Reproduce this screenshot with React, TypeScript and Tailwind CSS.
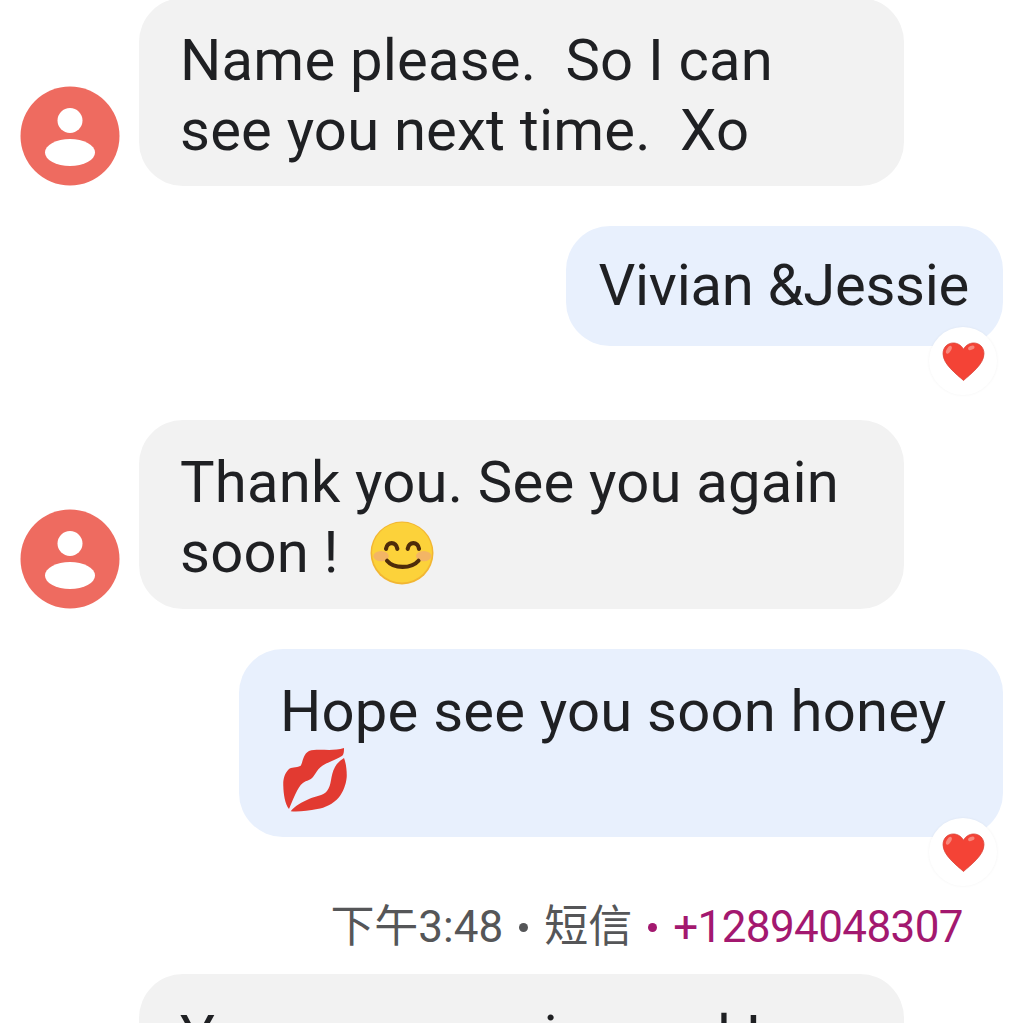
const font = "[font-family:Roboto,'Noto_Sans_CJK_SC',sans-serif]";

function Avatar() {
  return (
    <svg viewBox="0 0 100 100" className="w-[100px] h-[100px] shrink-0">
      <circle cx="50" cy="50" r="49.5" fill="#ee6b60" />
      <circle cx="50" cy="34.5" r="12.5" fill="#fff" />
      <ellipse cx="50" cy="66.5" rx="25" ry="13.5" fill="#fff" />
    </svg>
  );
}

function Heart() {
  return (
    <div className="absolute right-[6px] bottom-[-49px] w-[68px] h-[68px] rounded-full bg-white shadow-[0_0_3px_rgba(0,0,0,0.05)] flex items-center justify-center">
      <svg viewBox="0 0 44 40" className="w-[43px] h-[39px]">
        <path d="M22 39.500 C15 33 1 23 1 12 C1 5 6 1 11.500 1 C16 1 20 3.500 22 7.500 C24 3.500 28 1 32.500 1 C38 1 43 5 43 12 C43 23 29 33 22 39.500Z" fill="#f44336" stroke="#d9443a" strokeWidth="0.8" />
        <ellipse cx="7" cy="8" rx="2.200" ry="4.500" transform="rotate(30 7 8)" fill="#f7877c" />
        <ellipse cx="30" cy="6" rx="3.500" ry="2" transform="rotate(-25 30 6)" fill="#f7877c" />
      </svg>
    </div>
  );
}

function Smile() {
  return (
    <svg viewBox="0 0 62 62" className="ml-[2px] w-[64px] h-[64px] inline-block align-[-13px]">
      <circle cx="31" cy="31" r="30.500" fill="#f2b632" />
      <circle cx="31" cy="30.500" r="29" fill="#fcd23a" />
      <ellipse cx="10.700" cy="34" rx="7.500" ry="5" fill="#f3b565" />
      <ellipse cx="52" cy="34" rx="7.500" ry="5" fill="#f3b565" />
      <path d="M15.500 27 C16.500 19.500 25.500 19.500 26.500 27" fill="none" stroke="#4e2c0a" strokeWidth="4" strokeLinecap="round" />
      <path d="M36.500 27 C37.500 19.500 46.500 19.500 47.500 27" fill="none" stroke="#4e2c0a" strokeWidth="4" strokeLinecap="round" />
      <path d="M16.500 38.500 C23 46.500 40 46.500 47 38.500" fill="none" stroke="#4e2c0a" strokeWidth="4" strokeLinecap="round" />
    </svg>
  );
}

function Lips() {
  return (
    <svg viewBox="0 0 66 66" className="w-[66px] h-[66px] block">
      <path d="M62 0 C50 4 36 0 27 3 C21 6 21 14 18.700 17.700 C14 20 9 19 7 21 C2 26 1 32 1.300 38 C1.500 46 3 56 7 61 C10 54 14 43 18.700 37 C23 32 28 33 31 29 C34 25 35 22 38.700 19 C45 14 54 12 60.300 7.700 C62 6 62 3 62 0Z" fill="#e23a31" />
      <path d="M8.700 63.300 C13 58 20 54 27 51 C33 48 41 48 45 43 C50 37 48 28 53 19 C55 15 59 12 62 10 C64 15 65 23 64.700 29.300 C64 37 61 44 57 49.300 C51 56 43 60 35.300 61 C26 63 16 64 8.700 63.300Z" fill="#e23a31" />
    </svg>
  );
}

export default function App() {
  return (
    <div className={`w-[1023px] h-[1023px] overflow-hidden bg-white text-[#1f2023] ${font}`}>
      <div className="-mt-[2px] flex flex-col">
        <div className="flex items-end pl-[20px] gap-[19px]">
          <Avatar />
          <div className="w-[765px] h-[188px] rounded-[44px] bg-[#f2f2f2] pl-[41px] pt-[27px] text-[58px] leading-[70px] tracking-[0.2px] whitespace-pre">
            {"Name please.  So I can\nsee you next time.  Xo"}
          </div>
        </div>

        <div className="mt-[40px] self-end mr-[20px] relative">
          <div className="h-[120px] rounded-[44px] bg-[#e8f0fd] pl-[32px] pr-[34px] pb-[2px] flex items-center text-[58px] leading-[70px] tracking-[-0.3px] whitespace-pre">
            Vivian &amp;Jessie
          </div>
          <Heart />
        </div>

        <div className="mt-[74px] flex items-end pl-[20px] gap-[19px]">
          <Avatar />
          <div className="w-[765px] h-[189px] rounded-[44px] bg-[#f2f2f2] pl-[41px] pt-[27px] text-[58px] leading-[70px] tracking-[0.2px] whitespace-pre">
            {"Thank you. See you again\nsoon !  "}<Smile />
          </div>
        </div>

        <div className="mt-[40px] self-end mr-[20px] relative">
          <div className="w-[764px] h-[188px] rounded-[44px] bg-[#e8f0fd] pl-[41px] pt-[27px] text-[58px] leading-[70px] tracking-[0.2px]">
            <div>Hope see you soon honey</div>
            <div className="ml-[2px] mt-[2px]"><Lips /></div>
          </div>
          <Heart />
        </div>

        <div className="mt-[62px] self-end mr-[60px] text-[44px] leading-[56px] whitespace-pre text-[#555658] flex items-center">
          <span>下午3:48</span>
          <span className="mx-[16px] w-[9px] h-[9px] rounded-full bg-[#555658]" />
          <span>短信</span>
          <span className="ml-[16px] mr-[16px] w-[9px] h-[9px] rounded-full bg-[#a3186f]" />
          <span className="text-[#a3186f] tracking-[-0.6px]">+12894048307</span>
        </div>

        <div className="mt-[19px] ml-[139px] w-[765px] h-[200px] rounded-[44px] bg-[#f2f2f2] pl-[41px] pt-[27px] text-[58px] leading-[70px] tracking-[0.2px] whitespace-pre">
          You are very nice and I
        </div>
      </div>
    </div>
  );
}
